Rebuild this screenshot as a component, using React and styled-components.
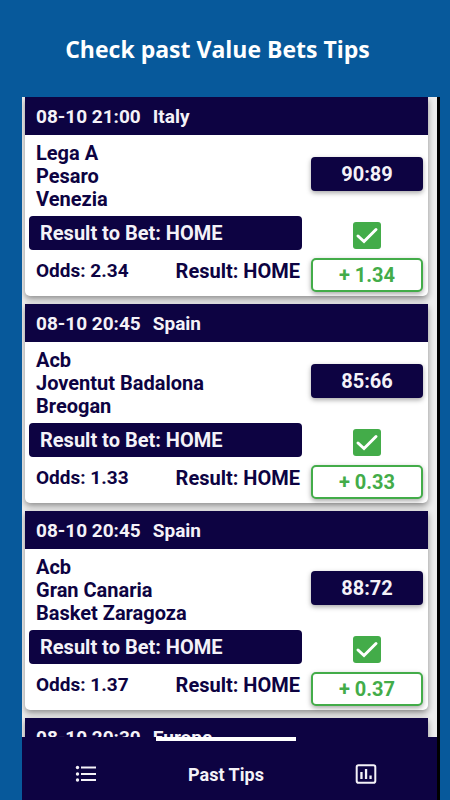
import React from 'react';
import styled, { createGlobalStyle } from 'styled-components';

const NAVY = '#0d0342';
const GREEN = '#43ac49';

const GlobalStyle = createGlobalStyle`
  * {
    box-sizing: border-box;
  }

  body {
    margin: 0;
    background: #07599b;
    font-family: Roboto, "Liberation Sans", sans-serif;
  }
`;

const Page = styled.div`
  display: flex;
  flex-direction: column;
  height: 100vh;
  padding: 0 10px 0 22px;
`;

const Title = styled.h1`
  margin: 0;
  padding: 33px 27px 31px 0;
  color: #fff;
  font-family: "Open Sans", "Noto Sans", sans-serif;
  font-size: 23px;
  font-weight: 700;
  line-height: 33px;
  text-align: center;
`;

const Phone = styled.div`
  display: flex;
  flex: 1;
  flex-direction: column;
  min-height: 0;
  border-right: 3px solid #000;
  background: #eee;
`;

const TipList = styled.main`
  display: flex;
  flex: 1;
  flex-direction: column;
  gap: 8px;
  min-height: 0;
  padding: 0 9px 0 3px;
  overflow: hidden;
`;

const Card = styled.article`
  flex-shrink: 0;
  border-radius: 0 0 5px 5px;
  background: #fff;
  box-shadow: 0 3px 6px rgba(0, 0, 0, 0.4);
`;

const CardHeader = styled.header`
  display: flex;
  gap: 12px;
  padding: 2px 11px 0;
  background: ${NAVY};
  color: #f4f2f8;
  font-size: 19px;
  font-weight: 700;
  line-height: 36px;
`;

const CardBody = styled.div`
  display: grid;
  grid-template-columns: 1fr 112px;
  column-gap: 9px;
  padding: 7px 5px 4px 4px;
  color: ${NAVY};
  font-size: 20px;
  font-weight: 700;
`;

const Column = styled.div`
  display: flex;
  flex-direction: column;
  justify-content: ${(props) => (props.$end ? 'flex-end' : 'flex-start')};
`;

const Teams = styled.div`
  padding: 0 7px;
  line-height: 23px;
`;

const Pick = styled.div`
  margin-top: 5px;
  padding: 0 11px;
  border-radius: 4px;
  background: ${NAVY};
  color: #f4f2f8;
  line-height: 34px;
`;

const Outcome = styled.div`
  display: flex;
  justify-content: space-between;
  padding: 10px 2px 10px 7px;
  line-height: 22px;
`;

const Odds = styled.span`
  font-size: 19px;
`;

const Score = styled.div`
  border-radius: 4px;
  background: ${NAVY};
  box-shadow: 0 2px 5px rgba(0, 0, 0, 0.35);
  color: #f4f2f8;
  line-height: 34px;
  text-align: center;
`;

const Profit = styled.div`
  border: 2px solid ${GREEN};
  border-radius: 5px;
  background: #fff;
  box-shadow: 0 2px 5px rgba(0, 0, 0, 0.35);
  color: ${GREEN};
  line-height: 30px;
  text-align: center;
`;

const Won = styled.label`
  display: grid;
  place-items: center;
  margin: 31px 0 9px;

  > * {
    grid-area: 1 / 1;
  }
`;

const WonBox = styled.input`
  width: 28px;
  height: 27px;
  margin: 0;
  appearance: none;
  border-radius: 3px;
  background: ${GREEN};
`;

const Nav = styled.nav`
  display: flex;
  justify-content: center;
  height: 63px;
  padding-right: 7px;
  overflow: hidden;
  background: ${NAVY};
`;

const Tab = styled.button`
  display: flex;
  flex: 1 0 140px;
  align-items: center;
  justify-content: center;
  padding: 7px 0 0;
  border: 0;
  border-top: 4px solid ${(props) => (props.$active ? '#fff' : 'transparent')};
  background: transparent;
  color: #f4f2f8;
  font-family: inherit;
  font-size: 18px;
  font-weight: 700;
`;

const ListIcon = () => (
  <svg width="22" height="18" viewBox="0 0 22 18" fill="currentColor" aria-hidden="true">
    <circle cx="2.5" cy="2.5" r="1.7" />
    <circle cx="2.5" cy="9" r="1.7" />
    <circle cx="2.5" cy="15" r="1.7" />
    <path d="M6 1.5h15v2H6zM6 8h15v2H6zM6 14h15v2H6z" />
  </svg>
);

const ChartIcon = () => (
  <svg width="22" height="20" viewBox="0 0 22 20" fill="currentColor" aria-hidden="true">
    <rect x="1.7" y="1.3" width="18.6" height="17.4" rx="1.8" fill="none" stroke="currentColor" strokeWidth="2" />
    <path d="M5.3 8h2.3v7H5.3zM9.9 5h2.3v10H9.9zM14.4 11.5h2.3V15h-2.3z" />
  </svg>
);

const CheckMark = () => (
  <svg width="28" height="27" viewBox="0 0 28 27" fill="none" aria-hidden="true">
    <path d="M5 14l6 5.5L23 7.5" stroke="#fff" strokeWidth="3" strokeLinecap="round" />
  </svg>
);

const tips = [
  { time: '08-10 21:00', country: 'Italy', league: 'Lega A', home: 'Pesaro', away: 'Venezia', score: '90:89', odds: '2.34', profit: '1.34' },
  { time: '08-10 20:45', country: 'Spain', league: 'Acb', home: 'Joventut Badalona', away: 'Breogan', score: '85:66', odds: '1.33', profit: '0.33' },
  { time: '08-10 20:45', country: 'Spain', league: 'Acb', home: 'Gran Canaria', away: 'Basket Zaragoza', score: '88:72', odds: '1.37', profit: '0.37' },
  { time: '08-10 20:30', country: 'Europe' },
];

const Tip = ({ tip }) => (
  <Card>
    <CardHeader>
      <span>{tip.time}</span>
      <span>{tip.country}</span>
    </CardHeader>
    {tip.score && (
      <CardBody>
        <Column>
          <Teams>
            <div>{tip.league}</div>
            <div>{tip.home}</div>
            <div>{tip.away}</div>
          </Teams>
          <Pick>Result to Bet: HOME</Pick>
          <Outcome>
            <Odds>Odds: {tip.odds}</Odds>
            <span>Result: HOME</span>
          </Outcome>
        </Column>
        <Column $end>
          <Score>{tip.score}</Score>
          <Won>
            <WonBox type="checkbox" aria-label="Tip won" checked readOnly />
            <CheckMark />
          </Won>
          <Profit>+ {tip.profit}</Profit>
        </Column>
      </CardBody>
    )}
  </Card>
);

const App = () => (
  <Page>
    <GlobalStyle />
    <Title>Check past Value Bets Tips</Title>
    <Phone>
      <TipList>
        {tips.map((tip, index) => (
          <Tip key={index} tip={tip} />
        ))}
      </TipList>
      <Nav>
        <Tab type="button" aria-label="Tips">
          <ListIcon />
        </Tab>
        <Tab type="button" $active>Past Tips</Tab>
        <Tab type="button" aria-label="Statistics">
          <ChartIcon />
        </Tab>
      </Nav>
    </Phone>
  </Page>
);

export default App;
